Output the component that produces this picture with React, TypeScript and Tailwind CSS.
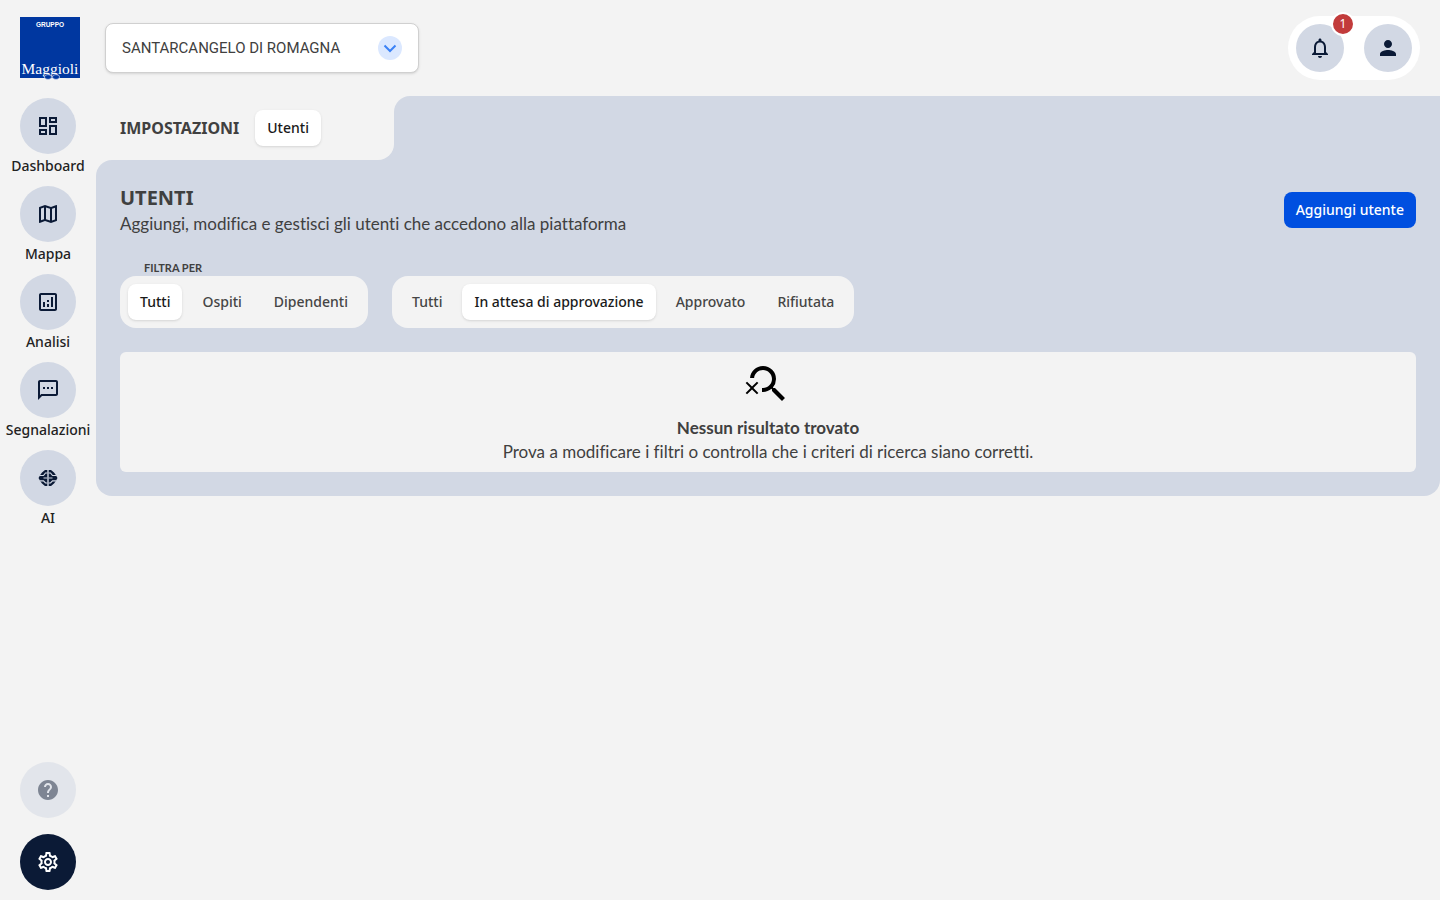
import { useState } from 'react';
import type { IconType } from 'react-icons';
import {
  MdHelp,
  MdOutlineAnalytics,
  MdOutlineDashboard,
  MdOutlineMap,
  MdOutlineNotifications,
  MdOutlineSettings,
  MdOutlineSms,
  MdPerson,
  MdSearchOff,
} from 'react-icons/md';

function Logo() {
  return (
    <svg width="60" height="64" viewBox="0 0 60 64" role="img" aria-label="Gruppo Maggioli">
      <rect y="1" width="60" height="61" fill="#0037a0" />
      <text x="30" y="11" textAnchor="middle" fill="#fff" fontSize="6.500" fontWeight="700" fontFamily="Liberation Sans, sans-serif">
        GRUPPO
      </text>
      <text x="30" y="58" textAnchor="middle" fill="#fff" fontSize="15.500" fontFamily="Liberation Serif, serif">
        Maggioli
      </text>
      <ellipse cx="28" cy="61" rx="3.600" ry="2.400" fill="#0037a0" stroke="#fff" strokeWidth=".6" />
      <ellipse cx="36" cy="61" rx="3.600" ry="2.400" fill="#0037a0" stroke="#fff" strokeWidth=".6" />
    </svg>
  );
}

// Brain seen from above, the folds are cut out in the colour of the round button
function BrainIcon({ className }: { className?: string }) {
  return (
    <svg viewBox="0 0 24 24" className={className} fill="none" aria-hidden="true">
      <path
        fill="currentColor"
        d="M9 4h2.300v16H9l-3-2.500L4.500 15.500 2.500 12l2-3.500L6 6.500 9 4ZM15 4h-2.300v16H15l3-2.500 1.500-2 2-3.500-2-3.500-1.500-2L15 4Z"
      />
      <g stroke="#d2d8e4" strokeWidth="1.200">
        <path d="M3.500 9.500h4l2-2.500h2M4 14.800h3.500l2 2.200h2M7.500 12h3.800" />
        <path d="M20.500 9.500h-4l-2-2.500h-2M20 14.800h-3.500l-2 2.200h-2M16.500 12h-3.800" />
      </g>
    </svg>
  );
}

interface NavItem {
  label: string;
  icon: IconType | typeof BrainIcon;
}

const navItems: NavItem[] = [
  { label: 'Dashboard', icon: MdOutlineDashboard },
  { label: 'Mappa', icon: MdOutlineMap },
  { label: 'Analisi', icon: MdOutlineAnalytics },
  { label: 'Segnalazioni', icon: MdOutlineSms },
  { label: 'AI', icon: BrainIcon },
];

const userTypes = ['Tutti', 'Ospiti', 'Dipendenti'];
const userStatuses = ['Tutti', 'In attesa di approvazione', 'Approvato', 'Rifiutata'];

function Sidebar() {
  return (
    <aside className="sticky top-0 flex h-screen w-24 shrink-0 flex-col items-center pt-4 pb-[10px]">
      <a href="#home" className="ml-1">
        <Logo />
      </a>
      <nav className="mt-[18px] flex flex-col gap-2">
        {navItems.map(({ label, icon: Icon }) => (
          <a key={label} href={`#${label.toLowerCase()}`} className="flex flex-col items-center">
            <span className="flex size-14 items-center justify-center rounded-full bg-[#d2d8e4] text-[#0b1a36]">
              <Icon className="size-6" />
            </span>
            <span className="text-sm/6 font-medium text-[#222]">{label}</span>
          </a>
        ))}
      </nav>
      <div className="mt-auto flex flex-col gap-4">
        <button
          type="button"
          aria-label="Aiuto"
          disabled
          className="flex size-14 items-center justify-center rounded-full bg-[#d2d8e4] text-[#0b1a36] opacity-50"
        >
          <MdHelp className="size-6" />
        </button>
        <button
          type="button"
          aria-label="Impostazioni"
          className="flex size-14 items-center justify-center rounded-full bg-[#0b1a36] text-white"
        >
          <MdOutlineSettings className="size-6" />
        </button>
      </div>
    </aside>
  );
}

function Header() {
  return (
    <header className="flex h-24 items-center justify-between pr-5 pl-[9px]">
      <div className="relative">
        <select
          aria-label="Comune"
          className="h-[50px] w-[314px] appearance-none rounded-lg border border-[#d0d0d0] bg-white pr-14 pl-4 font-['Roboto',sans-serif] text-[15px] text-[#404040] shadow-sm"
        >
          <option>SANTARCANGELO DI ROMAGNA</option>
        </select>
        <span className="pointer-events-none absolute top-[13px] right-[17px] flex size-6 items-center justify-center rounded-full bg-[#dbe8ff] text-[#3b82f6]">
          <svg viewBox="0 0 24 24" className="size-6" fill="none" stroke="currentColor" strokeWidth="2" aria-hidden="true">
            <path d="m6.500 9.500 5.500 5.500 5.500-5.500" />
          </svg>
        </span>
      </div>

      <div className="flex gap-5 rounded-full bg-white p-2">
        <button
          type="button"
          aria-label="Notifiche"
          className="relative flex size-12 items-center justify-center rounded-full bg-[#d2d8e4] text-[#0b1a36]"
        >
          <MdOutlineNotifications className="size-6" />
          <span className="absolute -top-3 -right-[11px] flex size-6 items-center justify-center rounded-full border-2 border-white bg-[#c23b3b] text-xs text-white">
            1
          </span>
        </button>
        <button
          type="button"
          aria-label="Profilo"
          className="flex size-12 items-center justify-center rounded-full bg-[#d2d8e4] text-[#0b1a36]"
        >
          <MdPerson className="size-6" />
        </button>
      </div>
    </header>
  );
}

interface FilterGroupProps {
  label: string;
  options: string[];
  value: string;
  onChange: (value: string) => void;
}

function FilterGroup({ label, options, value, onChange }: FilterGroupProps) {
  return (
    <div role="group" aria-label={label} className="flex gap-2 rounded-2xl bg-[#f3f3f3] p-2">
      {options.map((option) => (
        <button
          key={option}
          type="button"
          aria-pressed={value === option}
          onClick={() => onChange(option)}
          className={
            value === option
              ? 'h-9 rounded-lg bg-white px-3 text-sm font-medium text-[#1a1a1a] shadow-sm'
              : 'h-9 rounded-lg px-3 text-sm font-medium text-[#454545]'
          }
        >
          {option}
        </button>
      ))}
    </div>
  );
}

export default function App() {
  const [userType, setUserType] = useState('Tutti');
  const [status, setStatus] = useState('In attesa di approvazione');

  return (
    <div className="flex min-h-screen bg-[#f3f3f3] font-['Noto_Sans',sans-serif] text-[#404040] [font-variant-ligatures:none]">
      <Sidebar />
      <div className="min-w-0 flex-1">
        <Header />
        <main>
          {/* Section tabs, cut out of the panel */}
          <div className="flex h-16 bg-[#d2d8e4]">
            <div className="flex w-[298px] items-center gap-4 rounded-br-2xl bg-[#f3f3f3] pl-6">
              <span className="font-bold">IMPOSTAZIONI</span>
              <button type="button" className="h-9 rounded-lg bg-white px-3 text-sm font-medium text-[#1a1a1a] shadow-sm">
                Utenti
              </button>
            </div>
            <div className="flex-1 bg-[#f3f3f3]">
              <div className="h-full rounded-tl-2xl bg-[#d2d8e4]" />
            </div>
          </div>

          <section className="rounded-b-2xl rounded-tl-2xl bg-[#d2d8e4] p-6">
            <div className="flex items-center justify-between">
              <div>
                <h1 className="text-xl/7 font-bold">UTENTI</h1>
                <p className="font-['Lato',sans-serif] text-[17px]/6">
                  Aggiungi, modifica e gestisci gli utenti che accedono alla piattaforma
                </p>
              </div>
              <button type="button" className="h-9 rounded-lg bg-[#004fe0] px-3 text-sm font-medium text-white">
                Aggiungi utente
              </button>
            </div>

            <p className="mt-6 pl-6 font-['Lato',sans-serif] text-[11px]/4 font-bold">FILTRA PER</p>
            <div className="flex flex-wrap gap-6">
              <FilterGroup label="Tipo di utente" options={userTypes} value={userType} onChange={setUserType} />
              <FilterGroup label="Stato" options={userStatuses} value={status} onChange={setStatus} />
            </div>

            <div className="mt-6 flex flex-col items-center rounded-md bg-[#f3f3f3] p-2 text-center font-['Lato',sans-serif]">
              <MdSearchOff className="mb-2 size-12 text-black" />
              <p className="text-[17px]/6 font-bold">Nessun risultato trovato</p>
              <p className="text-[17px]/6">
                Prova a modificare i filtri o controlla che i criteri di ricerca siano corretti.
              </p>
            </div>
          </section>
        </main>
      </div>
    </div>
  );
}
